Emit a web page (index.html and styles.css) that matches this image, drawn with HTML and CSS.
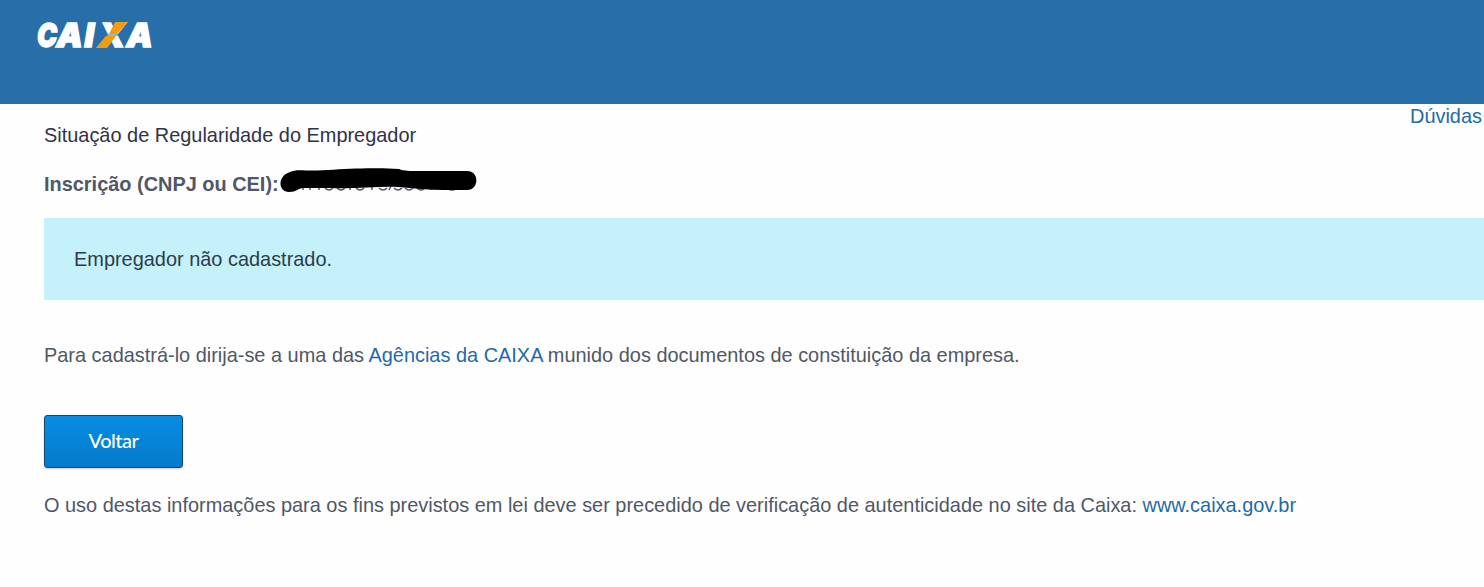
FILE: index.html
```html
<!DOCTYPE html>
<html lang="pt-BR">
<head>
  <meta charset="UTF-8" />
  <title>Situação de Regularidade do Empregador</title>
  <link rel="stylesheet" href="styles.css">
</head>
<body>

  <header class="topo">
    <svg class="logo" width="120" height="32" viewBox="0 0 120 32" role="img" aria-label="CAIXA">
      <g class="logo-texto">
        <text x="1" y="28" textLength="20" lengthAdjust="spacingAndGlyphs">C</text>
        <text y="28"><tspan x="20.500">A</tspan><tspan x="48.500">I</tspan><tspan x="63">X</tspan><tspan x="90.500">A</tspan></text>
      </g>
      <!-- faixa laranja do X -->
      <polygon class="faixa" points="79,3 92,3 81,15 73,15" />
      <polygon class="faixa" points="70,17 80,17 71,29 60,29" />
      <path class="corte" d="M70 16H82" />
    </svg>
  </header>

  <main class="conteudo">
    <a class="duvidas" href="#">Dúvidas</a>

    <h1>Situação de Regularidade do Empregador</h1>

    <div class="inscricao">
      <strong>Inscrição (CNPJ ou CEI):</strong>
      <!-- número oculto -->
      <svg class="tarja" width="198" height="26" viewBox="0 0 198 26">
        <path class="restos" d="M22 21h2M29 21h2M38 21h2M45 20q4 4 8 0M57 20q4 4 8 0M69 21h2M76 20q4 4 8 0M92 19v3M99 20q4 4 8 0M109 22l2-4M114 20q4 4 8 0M125 20q4 4 8 0M137 20q4 4 8 0M151 19v3M168 21q4 2 8 0" />
        <path class="risco" d="M10 4C14 2 19 2 26 2.500C44 3 58 1 76 .5C94 0 108 0 119 1C124 3 130 3 139 3H187C200 3 199 22 187 22H164C149 22 134 20 118 19C99 18 77 21 51 20H23C18 20 17 24 9 24C-2 24-3 8 10 4Z" />
      </svg>
    </div>

    <div class="aviso">Empregador não cadastrado.</div>

    <p class="orientacao">Para cadastrá-lo dirija-se a uma das <a href="#">Agências da CAIXA</a> munido dos documentos de constituição da empresa.</p>

    <button class="voltar" type="button">Voltar</button>

    <p class="rodape">O uso destas informações para os fins previstos em lei deve ser precedido de verificação de autenticidade no site da Caixa: <a href="#">www.caixa.gov.br</a></p>
  </main>

</body>
</html>
```
FILE: styles.css
```css
body {
  margin: 0;
  background: #fefefe;
  color: #505766;
  font-family: "Liberation Sans", Arial, sans-serif;
  font-size: 19.93px;
  line-height: 24px;
  overflow-x: hidden;
}

a {
  color: #1e6ba8;
  text-decoration: none;
}

/* Topo */
.topo {
  height: 104px;
  box-sizing: border-box;
  padding: 19px 0 0 36px;
  background: #286fa9;
}

.logo {
  display: block;
  overflow: visible;
}

.logo-texto {
  fill: #fff;
  stroke: #fff;
  stroke-width: 1.5;
  font-family: Inter, sans-serif;
  font-size: 33px;
  font-weight: 900;
  font-style: italic;
}

.faixa {
  fill: #f39c12;
}

.corte {
  stroke: #286fa9;
}

/* Conteudo */
.conteudo {
  display: flex;
  flex-direction: column;
  align-items: flex-start;
  padding-left: 44px;
}

.duvidas {
  align-self: flex-end;
  height: 19px;
  margin-right: 2px;
}

h1 {
  margin: 0;
  color: #303348;
  font-size: 19.93px;
  font-weight: normal;
}

.inscricao {
  display: flex;
  margin-top: 21px;
  height: 28px;
}

.inscricao strong {
  margin-top: 4px;
}

.tarja {
  margin-left: 1px;
}

.restos {
  fill: none;
  stroke: #505766;
  stroke-width: 1.5;
}

.aviso {
  align-self: stretch;
  box-sizing: border-box;
  height: 82px;
  margin-top: 22px;
  padding: 29px 30px;
  background: #c5f1fa;
  color: #2d3c4c;
}

.orientacao {
  margin: 43px 0 0;
}

.voltar {
  width: 139px;
  height: 53px;
  margin-top: 48px;
  padding: 0 0 4px;
  border: 1px solid #15476f;
  border-radius: 3px;
  background: linear-gradient(#078de2, #047bca);
  box-shadow: 0 1px 2px rgba(0, 0, 0, 0.2);
  color: #fff;
  font-family: Lato, sans-serif;
  font-size: 20px;
  font-weight: 500;
  letter-spacing: -0.5px;
}

.rodape {
  margin: 25px 0 0;
  white-space: nowrap;
}
```
